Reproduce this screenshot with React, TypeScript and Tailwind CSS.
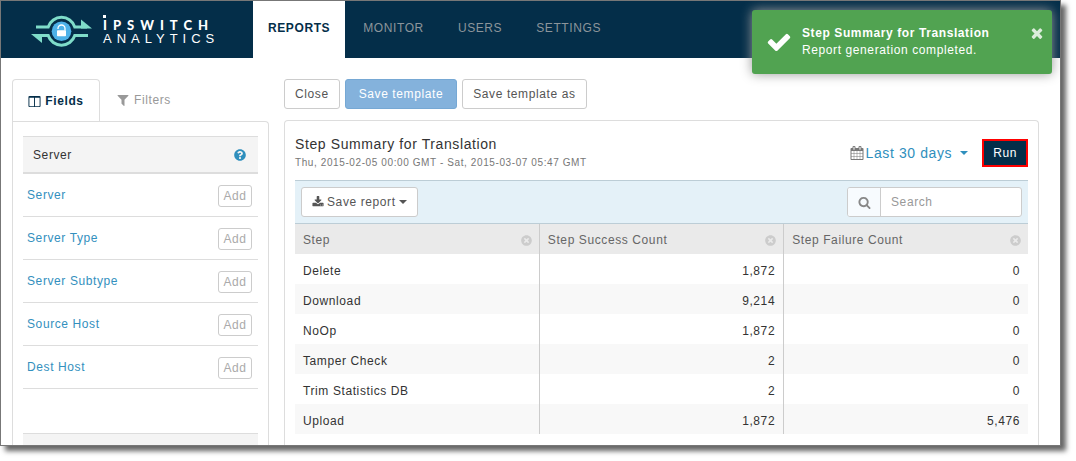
import { FaQuestionCircle, FaTimesCircle } from "react-icons/fa";

const paths = {
  check:
    "M1671 566q0 40-28 68l-724 724-136 136q-28 28-68 28t-68-28l-136-136-362-362q-28-28-28-68t28-68l136-136q28-28 68-28t68 28l294 295 656-657q28-28 68-28t68 28l136 136q28 28 28 68z",
  times:
    "M1490 1322q0 40-28 68l-136 136q-28 28-68 28t-68-28l-294-294-294 294q-28 28-68 28t-68-28l-136-136q-28-28-28-68t28-68l294-294-294-294q-28-28-28-68t28-68l136-136q28-28 68-28t68 28l294 294 294-294q28-28 68-28t68 28l136 136q28 28 28 68t-28 68l-294 294 294 294q28 28 28 68z",
  download:
    "M1344 1344q0-26-19-45t-45-19-45 19-19 45 19 45 45 19 45-19 19-45zm256 0q0-26-19-45t-45-19-45 19-19 45 19 45 45 19 45-19 19-45zm128-224v320q0 40-28 68t-68 28h-1472q-40 0-68-28t-28-68v-320q0-40 28-68t68-28h465l135 136q58 56 136 56t136-56l136-136h464q40 0 68 28t28 68zm-325-569q17 41-14 70l-448 448q-18 19-45 19t-45-19l-448-448q-31-29-14-70 17-39 59-39h256v-448q0-26 19-45t45-19h256q26 0 45 19t19 45v448h256q42 0 59 39z",
  columns:
    "M224 1536h608v-1152h-640v1120q0 13 9.5 22.5t22.5 9.5zm1376-32v-1120h-640v1152h608q13 0 22.5-9.5t9.5-22.5zm128-1216v1216q0 66-47 113t-113 47h-1344q-66 0-113-47t-47-113v-1216q0-66 47-113t113-47h1344q66 0 113 47t47 113z",
  calendar:
    "M192 1664h288v-288h-288v288zm352 0h320v-288h-320v288zm-352-352h288v-320h-288v320zm352 0h320v-320h-320v320zm-352-384h288v-288h-288v288zm736 736h320v-288h-320v288zm-384-736h320v-288h-320v288zm768 736h288v-288h-288v288zm-384-352h320v-320h-320v320zm-352-864v-288q0-13-9.5-22.5t-22.5-9.5h-64q-13 0-22.5 9.5t-9.5 22.5v288q0 13 9.5 22.5t22.5 9.5h64q13 0 22.5-9.5t9.5-22.5zm736 864h288v-320h-288v320zm-384-384h320v-288h-320v288zm384 0h288v-288h-288v288zm32-480v-288q0-13-9.5-22.5t-22.5-9.5h-64q-13 0-22.5 9.5t-9.5 22.5v288q0 13 9.5 22.5t22.5 9.5h64q13 0 22.5-9.5t9.5-22.5zm384-64v1280q0 52-38 90t-90 38h-1408q-52 0-90-38t-38-90v-1280q0-52 38-90t90-38h128v-96q0-66 47-113t113-47h64q66 0 113 47t47 113v96h384v-96q0-66 47-113t113-47h64q66 0 113 47t47 113v96h128q52 0 90 38t38 90z",
  filter:
    "M1595 295q17 41-14 70l-493 493v742q0 42-39 59-13 5-25 5-27 0-45-19l-256-256q-19-19-19-45v-486l-493-493q-31-29-14-70 17-39 59-39h1280q42 0 59 39z",
  search:
    "M1216 832q0-185-131.5-316.5t-316.5-131.5-316.5 131.5-131.5 316.5 131.5 316.5 316.5 131.5 316.5-131.5 131.5-316.5zm512 832q0 52-38 90t-90 38q-54 0-90-38l-343-342q-179 124-399 124-143 0-273.5-55.5t-225-150-150-225-55.5-273.5 55.5-273.5 150-225 225-150 273.5-55.5 273.5 55.5 225 150 150 225 55.5 273.5q0 220-124 399l343 343q37 37 37 90z",
};

function Icon({ name, className }: { name: keyof typeof paths; className: string }) {
  return (
    <svg viewBox="0 0 1792 1792" fill="currentColor" aria-hidden="true" className={`shrink-0 ${className}`}>
      <path d={paths[name]} />
    </svg>
  );
}

function Caret() {
  return (
    <svg viewBox="0 0 8 4" fill="currentColor" aria-hidden="true" className="h-1 w-2 shrink-0">
      <path d="M0 0h8L4 4z" />
    </svg>
  );
}

function Logo() {
  return (
    <a href="#home" className="flex w-[252px] shrink-0 items-center gap-2.5 pt-0.5 pl-[30px] text-white">
      <svg viewBox="0 0 62 32" aria-hidden="true" className="h-8 w-[62px]">
        <g fill="none" stroke="#7fdcc9" strokeWidth="3">
          <path d="M5 12H17.200A14 14 0 0 1 43.800 12H56" />
          <path d="M57 20.500H43.800A14 14 0 0 1 17.200 20.500H6" />
        </g>
        <path d="M50 4.500L61 13.500H50z" fill="#7fdcc9" />
        <path d="M0 19H11V28z" fill="#7fdcc9" />
        <circle cx="30.500" cy="16.300" r="9.800" fill="#4db1e8" />
        <rect x="26" y="15.300" width="9" height="6" rx="0.700" fill="#fff" />
        <path d="M27 14v-0.500a3.500 3.500 0 0 1 7 0v2" fill="none" stroke="#fff" strokeWidth="1.300" />
      </svg>
      <span className="flex flex-col leading-[14px]">
        <span className="size-[3px] bg-white" />
        <span className="font-[Lato,sans-serif] text-[13px] font-black tracking-[6px]">IPSWITCH</span>
        <span className="text-[13px] tracking-[5px]">ANALYTICS</span>
      </span>
    </a>
  );
}

const navItems = ["MONITOR", "USERS", "SETTINGS"];
const fields = ["Server", "Server Type", "Server Subtype", "Source Host", "Dest Host"];
const columns = ["Step", "Step Success Count", "Step Failure Count"];
const rows = [
  ["Delete", "1,872", "0"],
  ["Download", "9,214", "0"],
  ["NoOp", "1,872", "0"],
  ["Tamper Check", "2", "0"],
  ["Trim Statistics DB", "2", "0"],
  ["Upload", "1,872", "5,476"],
];

function Header() {
  return (
    <header className="flex h-[57px] shrink-0 bg-[#042e49]">
      <Logo />
      <nav className="flex items-stretch gap-0.5 text-[#8c959b]">
        <a href="#reports" className="flex items-center bg-white px-[15px] pb-1 font-bold text-[#042e49]">
          REPORTS
        </a>
        {navItems.map((item) => (
          <a key={item} href={`#${item.toLowerCase()}`} className="flex items-center px-4 pb-1 first-of-type:px-[15px]">
            {item}
          </a>
        ))}
      </nav>
    </header>
  );
}

function Toast() {
  return (
    <div
      role="status"
      className="absolute top-[9px] right-2 flex h-16 w-[300px] items-start rounded-[3px] bg-[#51a351] pr-[7px] pl-3.5 text-white shadow-[0_0_12px_#999]"
    >
      <Icon name="check" className="mt-[19px] size-[26px]" />
      <div className="grow pt-[15px] pl-2.5 leading-[17px]">
        <p className="font-bold">Step Summary for Translation</p>
        <p>Report generation completed.</p>
      </div>
      <button type="button" aria-label="Dismiss" className="mt-[15px] text-white/80">
        <Icon name="times" className="size-4" />
      </button>
    </div>
  );
}

function Sidebar() {
  return (
    <aside className="flex w-[257px] shrink-0 flex-col">
      <div className="flex">
        <button
          type="button"
          className="-mb-px flex h-[43px] w-[88px] items-center justify-center gap-1 rounded-t border border-b-0 border-[#ddd] bg-white font-bold text-[#042e49]"
        >
          <Icon name="columns" className="size-[13px]" />
          Fields
        </button>
        <button type="button" className="flex h-[42px] items-center gap-1 px-4 text-[#999]">
          <Icon name="filter" className="size-3.5" />
          Filters
        </button>
      </div>
      <div className="grow rounded-tr border border-b-0 border-[#ddd] px-2.5 pt-3.5">
        <h2 className="flex h-[38px] items-center justify-between border-t border-b-2 border-[#ddd] bg-[#f4f4f4] pr-3 pl-2.5 text-[#333]">
          Server
          <FaQuestionCircle className="size-3 text-[#2f8fbd]" />
        </h2>
        <ul>
          {fields.map((field) => (
            <li key={field} className="flex h-[43px] items-center justify-between border-b border-[#ddd] pr-1.5 pl-1">
              <a href="#field" className="text-[#3390be]">
                {field}
              </a>
              <button
                type="button"
                aria-label={`Add ${field}`}
                className="mt-0.5 h-[22px] w-[34px] rounded-[3px] border border-[#ccc] text-center text-[#aaa]"
              >
                Add
              </button>
            </li>
          ))}
        </ul>
        <div className="mt-11 h-[38px] border-t border-b-2 border-[#ddd] bg-[#f4f4f4]" />
      </div>
    </aside>
  );
}

function Report() {
  return (
    <section className="flex min-w-0 grow flex-col">
      <div className="flex gap-[5px] text-[#555]">
        <button type="button" className="h-[30px] rounded-[3px] border border-[#ccc] px-2.5">
          Close
        </button>
        <button type="button" className="h-[30px] rounded-[3px] border border-[#76a8d4] bg-[#84b2dc] px-[13px] text-white">
          Save template
        </button>
        <button type="button" className="h-[30px] rounded-[3px] border border-[#ccc] px-2.5">
          Save template as
        </button>
      </div>
      <div className="mt-[11px] grow rounded-t border border-b-0 border-[#ddd] px-2.5">
        <div className="flex h-[59px] items-start justify-between">
          <div className="pt-3.5">
            <h1 className="text-sm leading-[18px] text-[#333]">Step Summary for Translation</h1>
            <p className="text-[10px] leading-5 text-[#777]">Thu, 2015-02-05 00:00 GMT - Sat, 2015-03-07 05:47 GMT</p>
          </div>
          <div className="flex items-center gap-3.5 pt-[18px]">
            <button type="button" className="flex items-center text-sm text-[#2f8fbd]">
              <Icon name="calendar" className="mr-0.5 size-3.5 text-[#777]" />
              Last 30 days
              <span className="ml-2 flex">
                <Caret />
              </span>
            </button>
            <button type="button" className="h-7 border-2 border-[#ff0000] bg-[#042e49] px-[9px] text-white">
              Run
            </button>
          </div>
        </div>
        <div className="flex h-11 items-center justify-between border-y border-[#bccdd6] bg-[#e4f1f8] px-1.5">
          <button
            type="button"
            className="flex h-[30px] items-center gap-[3px] rounded-[3px] border border-[#ccc] bg-white px-2.5 text-[#555]"
          >
            <Icon name="download" className="size-3" />
            Save report
            <Caret />
          </button>
          <label className="flex h-[30px] w-[175px] overflow-hidden rounded-[3px] border border-[#ccc] bg-white">
            <span className="flex w-8 shrink-0 items-center justify-center bg-[#f7fbfe] text-[#888]">
              <Icon name="search" className="size-[13px]" />
            </span>
            <input
              type="search"
              aria-label="Search"
              placeholder="Search"
              className="min-w-0 grow border-l border-[#ccc] px-2.5 placeholder:text-[#999]"
            />
          </label>
        </div>
        <table className="w-full table-fixed text-[#333]">
          <thead className="bg-[#eaeaea] text-[#666]">
            <tr className="h-[30px]">
              {columns.map((column) => (
                <th key={column} scope="col" className="border-r border-[#ccc] pr-[7px] pl-2 text-left font-normal last:border-r-0">
                  <span className="flex items-center justify-between pt-0.5">
                    {column}
                    <button type="button" aria-label={`Remove ${column}`} className="text-[#ccc]">
                      <FaTimesCircle className="size-[11px]" />
                    </button>
                  </span>
                </th>
              ))}
            </tr>
          </thead>
          <tbody>
            {rows.map((row) => (
              <tr key={row[0]} className="h-[30px] even:bg-[#f8f8f8]">
                {row.map((cell, i) => (
                  <td
                    key={i}
                    className="border-r border-[#ccc] px-2 pt-1 text-right first:text-left last:border-r-0"
                  >
                    {cell}
                  </td>
                ))}
              </tr>
            ))}
          </tbody>
        </table>
      </div>
    </section>
  );
}

export default function App() {
  return (
    <div className="h-screen bg-white pr-[15px] pb-[15px] font-['Liberation_Sans',Arial,sans-serif] text-xs tracking-wider">
      <div className="relative flex h-full flex-col overflow-hidden border border-[#777] bg-white shadow-[5px_5px_5px_#666]">
        <Header />
        <main className="flex min-h-0 grow gap-[15px] pt-[21px] pr-[21px] pl-[11px]">
          <Sidebar />
          <Report />
        </main>
        <Toast />
      </div>
    </div>
  );
}
